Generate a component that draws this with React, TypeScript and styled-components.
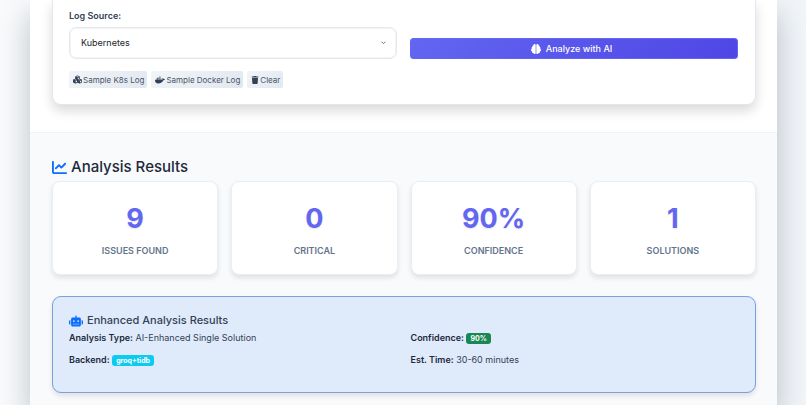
import React from "react";
import styled, { createGlobalStyle } from "styled-components";
import { FaBrain, FaChartLine, FaCubes, FaDocker, FaRobot, FaTrash } from "react-icons/fa6";

const GlobalStyle = createGlobalStyle`
  *, *::before, *::after { box-sizing: border-box; }
  body {
    margin: 0;
    font-family: Inter, "Liberation Sans", sans-serif;
    font-size: 9px;
    line-height: 14px;
    color: #334155;
    background: linear-gradient(90deg, #f8fafc, #f1f5f9);
  }
  h2, h3, p { margin: 0; font-weight: 500; }
`;

const Page = styled.div`
  padding: 0 29px 0 30px;
  overflow: hidden;
`;

const Container = styled.main`
  min-height: 100vh;
  display: flex;
  flex-direction: column;
  background: #fff;
  box-shadow: 0 14px 28px rgba(15, 23, 42, 0.25);
`;

const InputSection = styled.section`
  padding: 0 21px 27px 22px;
`;

const FormCard = styled.form`
  padding: 9px 17px 16px 16px;
  border: 1px solid #e2e8f0;
  border-top: 0;
  border-radius: 0 0 9px 9px;
  background: #fff;
  box-shadow: 0 6px 12px rgba(0, 0, 0, 0.15);
`;

const TwoColumns = styled.div`
  display: grid;
  grid-template-columns: 1fr 1fr;
  column-gap: 13px;
  align-items: end;
`;

const Label = styled.label`
  display: block;
  margin-bottom: 4px;
  font-weight: 600;
`;

const SelectWrap = styled.div`
  display: grid;
  align-items: center;

  > * { grid-area: 1 / 1; }
  > svg {
    justify-self: end;
    margin-right: 11px;
    pointer-events: none;
  }
`;

const Select = styled.select`
  width: 100%;
  height: 32px;
  padding: 0 11px;
  appearance: none;
  border: 1px solid #e5e9ee;
  border-radius: 7px;
  background: #fff;
  box-shadow: inset 0 0 0 1px #f1f3f6;
  color: #212529;
  font: inherit;
`;

const AnalyzeButton = styled.button`
  display: flex;
  align-items: center;
  justify-content: center;
  gap: 5px;
  height: 21px;
  padding: 0 5px 0 0;
  border: 1px solid #6366f1;
  border-radius: 3px;
  background: linear-gradient(135deg, #6366f1, #4f46e5);
  color: #fff;
  font: inherit;
  font-weight: 500;
`;

const SampleRow = styled.div`
  display: flex;
  gap: 4px;
  margin-top: 12px;
`;

const SampleButton = styled.button`
  display: flex;
  align-items: center;
  gap: 1px;
  height: 17px;
  padding: 0 3px 0 4px;
  border: 0;
  border-radius: 2px;
  background: linear-gradient(135deg, #f1f5f9, #e2e8f0);
  color: #475569;
  font: inherit;
  font-size: 8px;

  svg { color: #334155; }
`;

const ResultsSection = styled.section`
  flex: 1;
  padding: 24px 21px 12px 22px;
  border-top: 1px solid #eff2f5;
  background: #f8fafc;
`;

const ResultsTitle = styled.h2`
  display: flex;
  align-items: center;
  gap: 4px;
  margin-bottom: 4px;
  color: #1e293b;
  font-size: 15px;
  line-height: 20px;

  svg { color: #0d6efd; }
`;

const StatGrid = styled.div`
  display: grid;
  grid-template-columns: repeat(4, 1fr);
  gap: 13px;
`;

const StatCard = styled.article`
  height: 94px;
  padding-top: 21px;
  border: 1px solid #e9eef4;
  border-radius: 8px;
  background: #fff;
  box-shadow: 0 3px 5px rgba(0, 0, 0, 0.1);
  text-align: center;
`;

const StatValue = styled.div`
  color: #6366f1;
  font-size: 27px;
  font-weight: 700;
  line-height: 32px;
  text-shadow: 0 1px 2px rgba(0, 0, 0, 0.1);
`;

const StatLabel = styled.div`
  margin-top: 9px;
  color: #64748b;
  font-weight: 600;
  text-transform: uppercase;
`;

const InfoCard = styled.article`
  margin-top: 21px;
  padding: 16px 16px 25px;
  border: 1px solid #7c9fe0;
  border-radius: 9px;
  background: #dfebfb;
  box-shadow: 0 3px 5px rgba(0, 0, 0, 0.1);
`;

const InfoTitle = styled.h3`
  display: flex;
  align-items: center;
  gap: 4px;
  margin-bottom: 3px;
  color: #334155;
  font-size: 11px;
  line-height: 15px;

  svg { color: #0d6efd; }
`;

const InfoGrid = styled(TwoColumns)`
  row-gap: 8px;
`;

const InfoItem = styled.p`
  font-weight: 400;

  strong { color: #1e293b; font-weight: 600; }
`;

const Badge = styled.span<{ $tone: "info" | "success" }>`
  display: inline-block;
  padding: 0 4px;
  border-radius: 3px;
  background: ${({ $tone }) => ($tone === "info" ? "#0dcaf0" : "#198754")};
  color: #fff;
  font-size: 7px;
  font-weight: 700;
  line-height: 11px;
`;

const stats = [
  { value: "9", label: "Issues Found" },
  { value: "0", label: "Critical" },
  { value: "90%", label: "Confidence" },
  { value: "1", label: "Solutions" },
];

export default function App() {
  return (
    <>
      <GlobalStyle />
      <Page>
        <Container>
          <InputSection>
            <FormCard onSubmit={(event) => event.preventDefault()}>
              <TwoColumns>
                <div>
                  <Label htmlFor="log-source">Log Source:</Label>
                  <SelectWrap>
                    <Select id="log-source" defaultValue="kubernetes">
                      <option value="kubernetes">Kubernetes</option>
                      <option value="docker">Docker</option>
                    </Select>
                    <svg width="5" height="4" viewBox="0 0 5 4" fill="none" stroke="#64748b" aria-hidden="true">
                      <path d="M0.5 0.7 2.5 2.7 4.5 0.7" />
                    </svg>
                  </SelectWrap>
                </div>
                <AnalyzeButton type="submit">
                  <FaBrain size={10} />
                  Analyze with AI
                </AnalyzeButton>
              </TwoColumns>
              <SampleRow>
                <SampleButton type="button"><FaCubes size={9} />Sample K8s Log</SampleButton>
                <SampleButton type="button"><FaDocker size={10} />Sample Docker Log</SampleButton>
                <SampleButton type="reset"><FaTrash size={8} />Clear</SampleButton>
              </SampleRow>
            </FormCard>
          </InputSection>
          <ResultsSection>
            <ResultsTitle><FaChartLine size={15} />Analysis Results</ResultsTitle>
            <StatGrid>
              {stats.map((stat) => (
                <StatCard key={stat.label}>
                  <StatValue>{stat.value}</StatValue>
                  <StatLabel>{stat.label}</StatLabel>
                </StatCard>
              ))}
            </StatGrid>
            <InfoCard>
              <InfoTitle><FaRobot size={14} />Enhanced Analysis Results</InfoTitle>
              <InfoGrid>
                <InfoItem><strong>Analysis Type:</strong> AI-Enhanced Single Solution</InfoItem>
                <InfoItem><strong>Confidence:</strong> <Badge $tone="success">90%</Badge></InfoItem>
                <InfoItem><strong>Backend:</strong> <Badge $tone="info">groq+tidb</Badge></InfoItem>
                <InfoItem><strong>Est. Time:</strong> 30-60 minutes</InfoItem>
              </InfoGrid>
            </InfoCard>
          </ResultsSection>
        </Container>
      </Page>
    </>
  );
}
